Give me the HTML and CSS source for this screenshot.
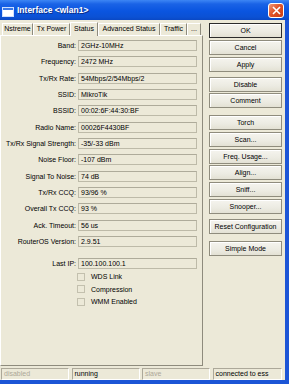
FILE: index.html
```html
<!DOCTYPE html>
<html>
<head>
<meta charset="utf-8">
<link rel="stylesheet" href="styles.css">
</head>
<body>
<div class="titlebar">
  <svg class="ticon" width="12" height="10" viewBox="0 0 12 10">
    <rect x="0.5" y="0.5" width="11" height="9" fill="#fff" stroke="#cfe0ff"/>
    <rect x="1" y="1" width="10" height="2" fill="#3a78e8"/>
  </svg>
  <span class="ttext">Interface &lt;wlan1&gt;</span>
  <div class="close">
    <svg width="9" height="9" viewBox="0 0 9 9"><path d="M1 1L8 8M8 1L1 8" stroke="#fff" stroke-width="1.6"/></svg>
  </div>
</div>
<div class="frame">
  <div class="content">
    <div class="leftcol">
      <div class="tabs">
        <div class="tab t1">Nstreme</div>
        <div class="tab t2">Tx Power</div>
        <div class="tab t3 sel">Status</div>
        <div class="tab t4">Advanced Status</div>
        <div class="tab t5">Traffic</div>
        <div class="tab t6">...</div>
      </div>
      <div class="panel">
        <div class="fields">
          <div class="lbl">Band:</div><div class="val">2GHz-10MHz</div>
          <div class="lbl">Frequency:</div><div class="val">2472 MHz</div>
          <div class="lbl">Tx/Rx Rate:</div><div class="val">54Mbps/2/54Mbps/2</div>
          <div class="lbl">SSID:</div><div class="val">MikroTik</div>
          <div class="lbl">BSSID:</div><div class="val">00:02:6F:44:30:BF</div>
          <div class="lbl">Radio Name:</div><div class="val">00026F4430BF</div>
          <div class="lbl">Tx/Rx Signal Strength:</div><div class="val">-35/-33 dBm</div>
          <div class="lbl">Noise Floor:</div><div class="val">-107 dBm</div>
          <div class="lbl">Signal To Noise:</div><div class="val">74 dB</div>
          <div class="lbl">Tx/Rx CCQ:</div><div class="val">93/96 %</div>
          <div class="lbl">Overall Tx CCQ:</div><div class="val">93 %</div>
          <div class="lbl">Ack. Timeout:</div><div class="val">56 us</div>
          <div class="lbl">RouterOS Version:</div><div class="val">2.9.51</div>
        </div>
        <div class="fields lastip">
          <div class="lbl">Last IP:</div><div class="val">100.100.100.1</div>
        </div>
        <div class="checks">
          <div class="chk"><span class="box"></span><span>WDS Link</span></div>
          <div class="chk"><span class="box"></span><span>Compression</span></div>
          <div class="chk"><span class="box"></span><span>WMM Enabled</span></div>
        </div>
      </div>
    </div>
    <div class="buttons">
      <div class="grp">
        <div class="btn def">OK</div>
        <div class="btn">Cancel</div>
        <div class="btn">Apply</div>
      </div>
      <div class="grp g2">
        <div class="btn">Disable</div>
        <div class="btn">Comment</div>
      </div>
      <div class="grp g3">
        <div class="btn">Torch</div>
        <div class="btn">Scan...</div>
        <div class="btn">Freq. Usage...</div>
        <div class="btn">Align...</div>
        <div class="btn">Sniff...</div>
        <div class="btn">Snooper...</div>
      </div>
      <div class="grp g4">
        <div class="btn">Reset Configuration</div>
      </div>
      <div class="grp g5">
        <div class="btn">Simple Mode</div>
      </div>
    </div>
  </div>
  <div class="statusbar">
    <div class="cell dis">disabled</div>
    <div class="cell">running</div>
    <div class="cell dis">slave</div>
    <div class="cell">connected to ess</div>
  </div>
</div>
</body>
</html>
```
FILE: styles.css
```css
* { box-sizing: border-box; }
html, body { margin: 0; padding: 0; }
body {
  width: 289px;
  height: 384px;
  overflow: hidden;
  background: #ECE9D8;
  font-family: "Liberation Sans", Arial, sans-serif;
  font-size: 7px;
  color: #000;
}
.titlebar {
  height: 20px;
  display: flex;
  align-items: center;
  padding-left: 2px;
  background: linear-gradient(180deg, #3d86f4 0%, #1a63e6 20%, #0a55e0 55%, #0b51d4 85%, #0a48c4 100%);
}
.ticon { margin-top: 3px; display: block; }
.ttext {
  margin-left: 3px;
  color: #fff;
  font-weight: bold;
  font-size: 8.5px;
  text-shadow: 1px 1px 0 #0a2f8a;
  flex: 1;
}
.close {
  width: 16px;
  height: 15px;
  margin-right: 5px;
  margin-top: 1px;
  border: 1px solid #fff;
  border-radius: 3px;
  background: linear-gradient(135deg, #f0987a 0%, #e0542a 45%, #c83c12 100%);
  display: flex;
  align-items: center;
  justify-content: center;
}
.close svg { display: block; }
.frame {
  height: 364px;
  border-right: 4px solid #1c55d6;
  border-bottom: 4px solid #1c55d6;
}
.content {
  height: 346px;
  display: flex;
}
.leftcol { width: 203px; }
.tabs {
  height: 15px;
  display: flex;
  align-items: flex-end;
  padding-left: 2px;
}
.tab {
  height: 12px;
  line-height: 10px;
  text-align: center;
  border: 1px solid;
  border-color: #fff #8e8b7d #fff #fff;
  border-bottom: none;
  background: #ECE9D8;
  white-space: nowrap;
}
.tab.sel {
  height: 14px;
  margin-bottom: -1px;
  position: relative;
  z-index: 1;
  line-height: 11px;
}
.t1 { width: 31px; }
.t2 { width: 37px; }
.t3 { width: 28px; }
.t4 { width: 62px; }
.t5 { width: 27px; }
.t6 { width: 14px; }
.panel {
  height: 331px;
  border: 1px solid;
  border-color: #fff #8e8b7d #8e8b7d #fff;
  padding-top: 4px;
}
.fields {
  display: grid;
  grid-template-columns: 75px 119px;
  column-gap: 2px;
  grid-auto-rows: 11px;
  row-gap: 5.33px;
}
.lbl {
  text-align: right;
  line-height: 11px;
  white-space: nowrap;
}
.val {
  border: 1px solid #bdbaa8;
  border-top-color: #aeab9a;
  line-height: 9px;
  padding-left: 2px;
  white-space: nowrap;
  overflow: hidden;
}
.lastip { margin-top: 11px; }
.checks {
  margin-top: 4px;
  padding-left: 76px;
  display: flex;
  flex-direction: column;
  gap: 4.5px;
}
.chk {
  display: flex;
  align-items: center;
  height: 8px;
}
.box {
  width: 8px;
  height: 8px;
  border: 1px solid #c3c0ae;
  margin-right: 6px;
}
.buttons {
  flex: 1;
  padding-left: 6px;
  padding-top: 3px;
}
.grp {
  width: 73px;
  display: flex;
  flex-direction: column;
  gap: 1.8px;
}
.g2 { margin-top: 5.1px; }
.g3 { margin-top: 6.5px; }
.g4 { margin-top: 5.3px; }
.g5 { margin-top: 6.7px; }
.btn {
  height: 15px;
  line-height: 13px;
  text-align: center;
  border: 1px solid #8f8c7d;
  background: linear-gradient(180deg, #f5f4ee 0%, #ecebe2 60%, #e3e1d4 100%);
  box-shadow: inset 1px 1px 0 #fff;
  white-space: nowrap;
}
.btn.def { border-color: #2c2c2c; }
.statusbar {
  margin-top: 2px;
  height: 12px;
  display: grid;
  grid-template-columns: 68px 68px 68px 69px;
  column-gap: 2.5px;
  padding-left: 1px;
}
.cell {
  border: 1px solid;
  border-color: #aca899 #fff #fff #aca899;
  line-height: 10px;
  padding-left: 2px;
  white-space: nowrap;
  overflow: hidden;
}
.cell.dis { color: #aca899; }
```
